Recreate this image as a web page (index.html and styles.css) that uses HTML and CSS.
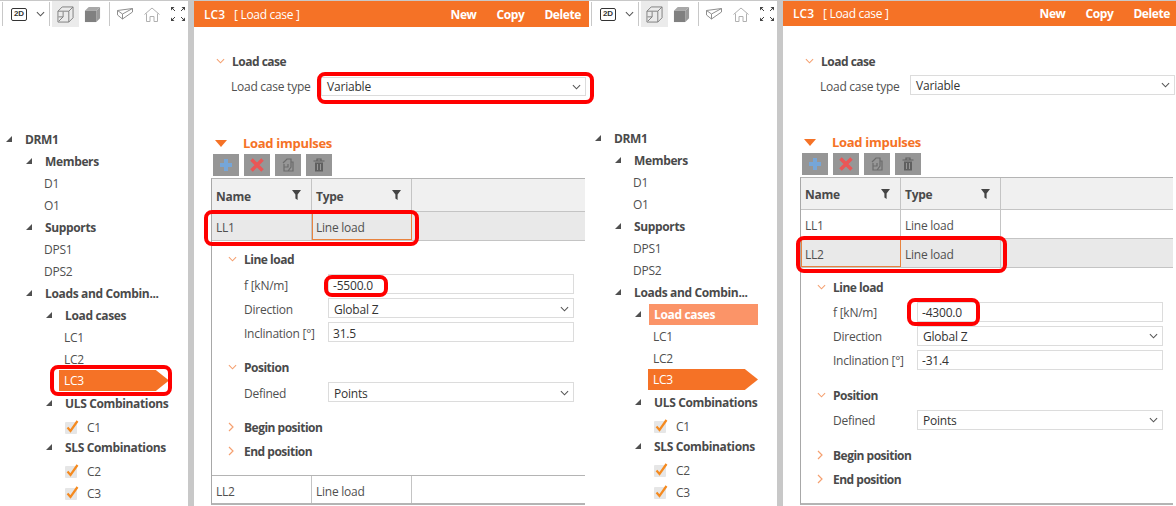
FILE: index.html
```html
<!DOCTYPE html>
<html lang="en">
<head>
<meta charset="utf-8">
<title>Load cases</title>
<link rel="stylesheet" href="styles.css">
</head>
<body>
<svg class="defs" aria-hidden="true">
  <symbol id="tri" viewBox="0 0 7 7"><path d="M7 0V7H0Z" fill="#505050"/></symbol>
  <symbol id="down" viewBox="0 0 10 6"><path d="M1 1l4 4 4-4" fill="none" stroke="#f5a070" stroke-width="1.2"/></symbol>
  <symbol id="right" viewBox="0 0 6 10"><path d="M1 1l4 4-4 4" fill="none" stroke="#f5a070" stroke-width="1.2"/></symbol>
  <symbol id="caret" viewBox="0 0 10 6"><path d="M1 1l4 4 4-4" fill="none" stroke="#555" stroke-width="1.2"/></symbol>
  <symbol id="funnel" viewBox="0 0 9 10"><path d="M0 0H9L5.6 4.5V10L3.4 8.5V4.5Z" fill="#444"/></symbol>
  <symbol id="check" viewBox="0 0 14 14"><rect x="0" y="2" width="12" height="12" rx="1" fill="#e6e6e6"/><path d="M2.5 7.5l3 3.5L12.5 1" fill="none" stroke="#f58a1f" stroke-width="2.2"/></symbol>
  <symbol id="wire" viewBox="0 0 18 18"><path d="M1 5.500H12.500V17H1ZM1 5.500L5.500 1H17V12.500L12.500 17M12.500 5.500L17 1M6.500 6V11.500H1.500M6.500 11.500L2 16" fill="none" stroke="#7d7d7d"/></symbol>
  <symbol id="solid" viewBox="0 0 18 18"><path d="M1 5L5 1H17L13 5Z" fill="#a8a8a8"/><path d="M13 5L17 1V13L13 17Z" fill="#9a9a9a"/><path d="M1 5H13V17H1Z" fill="#808080"/></symbol>
  <symbol id="box" viewBox="0 0 17 12"><path d="M.5 2.500L15.500 .5V4L5.500 11L.5 7ZM.5 2.500L5.500 6L15.500 .5M5.500 6V11" fill="none" stroke="#8f8f8f"/></symbol>
  <symbol id="home" viewBox="0 0 16 15"><path d="M.5 7.500L8 1l7.500 6.500M2.500 6.500V14.500H6V9.500H10V14.500H13.500V6.500" fill="none" stroke="#b0b0b0"/></symbol>
  <symbol id="expand" viewBox="0 0 16 16"><path d="M1 1H4.500L1 4.500ZM15 1V4.500L11.500 1ZM1 15V11.500L4.500 15ZM15 15H11.500L15 11.500Z" fill="#444"/><path d="M1.500 1.500L5 5M14.500 1.500L11 5M1.500 14.500L5 11M14.500 14.500L11 11" stroke="#444"/></symbol>
  <symbol id="plus" viewBox="0 0 14 14"><path d="M5 1H9V5H13V9H9V13H5V9H1V5H5Z" fill="#76a6d8"/></symbol>
  <symbol id="cross" viewBox="0 0 14 14"><path d="M1.500 1.500L12.500 12.500M12.500 1.500L1.500 12.500" stroke="#ea5656" stroke-width="3.500"/></symbol>
  <symbol id="copy" viewBox="0 0 14 14"><path d="M2 5L6 1H10V9L7 13H3V6M7 6V9H3M10 4H12V13H7" fill="none" stroke="#6c6c6c" stroke-width="1.200"/></symbol>
  <symbol id="bin" viewBox="0 0 14 14"><path d="M1.500 3H12.500M5 3V1H9V3" fill="none" stroke="#606060" stroke-width="1.200"/><path d="M3 4.500H11V13.500H3Z" fill="#606060"/><path d="M5.500 6V12M8.500 6V12" stroke="#969696"/></symbol>
</svg>

<main class="app">
  <!-- first capture -->
  <section class="shot shot-a">
    <aside class="side">
      <div class="tools">
        <span class="sep"></span><span class="badge2d">2D</span><svg class="ic-caret"><use href="#caret"/></svg><span class="sep"></span>
        <span class="tool on"><svg class="ic18"><use href="#wire"/></svg></span>
        <span class="tool"><svg class="ic18"><use href="#solid"/></svg></span><span class="sep"></span>
        <svg class="ic-box"><use href="#box"/></svg><svg class="ic-home"><use href="#home"/></svg><svg class="ic-expand"><use href="#expand"/></svg>
      </div>
      <ul class="tree">
        <li class="row l0 b"><svg class="tw"><use href="#tri"/></svg>DRM1</li>
        <li class="row l1 b"><svg class="tw"><use href="#tri"/></svg>Members</li>
        <li class="row leaf1">D1</li>
        <li class="row leaf1">O1</li>
        <li class="row l1 b"><svg class="tw"><use href="#tri"/></svg>Supports</li>
        <li class="row leaf1">DPS1</li>
        <li class="row leaf1">DPS2</li>
        <li class="row l1 b"><svg class="tw"><use href="#tri"/></svg>Loads and Combin...</li>
        <li class="row l2 b"><svg class="tw"><use href="#tri"/></svg>Load cases</li>
        <li class="row leaf2">LC1</li>
        <li class="row leaf2">LC2</li>
        <li class="row leaf2 sel">LC3<span class="ring ring-lc"></span></li>
        <li class="row l2 b"><svg class="tw"><use href="#tri"/></svg>ULS Combinations</li>
        <li class="row chk"><svg class="ck"><use href="#check"/></svg>C1</li>
        <li class="row l2 b"><svg class="tw"><use href="#tri"/></svg>SLS Combinations</li>
        <li class="row chk"><svg class="ck"><use href="#check"/></svg>C2</li>
        <li class="row chk"><svg class="ck"><use href="#check"/></svg>C3</li>
      </ul>
    </aside>
    <div class="split"></div>
    <div class="detail">
      <header class="bar"><span class="bar-name">LC3</span><span class="bar-kind">[ Load case ]</span><span class="bar-act">New</span><span class="bar-act">Copy</span><span class="bar-act">Delete</span></header>
      <div class="body">
        <h3 class="head case"><svg class="chev"><use href="#down"/></svg>Load case</h3>
        <div class="type-row"><span class="type-label">Load case type</span><span class="ctl sel-ctl type-ctl">Variable<svg class="ic-caret"><use href="#caret"/></svg><span class="ring ring-type"></span></span></div>
        <h2 class="imp"><span class="imp-tri"></span>Load impulses</h2>
        <div class="btns">
          <span class="btn"><svg><use href="#plus"/></svg></span><span class="btn"><svg><use href="#cross"/></svg></span><span class="btn"><svg><use href="#copy"/></svg></span><span class="btn"><svg><use href="#bin"/></svg></span>
        </div>
        <div class="table">
          <div class="tr th"><span class="td">Name<svg class="fn"><use href="#funnel"/></svg></span><span class="td">Type<svg class="fn"><use href="#funnel"/></svg></span><span class="td fill"></span></div>
          <div class="tr cur"><span class="td">LL1</span><span class="td focus">Line load</span><span class="td fill"></span><span class="ring ring-row-a"></span></div>
          <div class="panel">
            <h3 class="head"><svg class="chev"><use href="#down"/></svg>Line load</h3>
            <div class="fld"><span class="lab">f [kN/m]</span><span class="ctl">-5500.0<span class="ring ring-f-a"></span></span></div>
            <div class="fld"><span class="lab">Direction</span><span class="ctl sel-ctl">Global Z<svg class="ic-caret"><use href="#caret"/></svg></span></div>
            <div class="fld"><span class="lab">Inclination [°]</span><span class="ctl">31.5</span></div>
            <h3 class="head gap"><svg class="chev"><use href="#down"/></svg>Position</h3>
            <div class="fld"><span class="lab">Defined</span><span class="ctl sel-ctl">Points<svg class="ic-caret"><use href="#caret"/></svg></span></div>
            <h3 class="head gap2"><svg class="chev-r"><use href="#right"/></svg>Begin position</h3>
            <h3 class="head gap3"><svg class="chev-r"><use href="#right"/></svg>End position</h3>
          </div>
          <div class="tr last"><span class="td">LL2</span><span class="td">Line load</span><span class="td fill"></span></div>
        </div>
      </div>
    </div>
  </section>

  <!-- second capture -->
  <section class="shot shot-b">
    <aside class="side">
      <div class="tools">
        <span class="sep"></span><span class="badge2d">2D</span><svg class="ic-caret"><use href="#caret"/></svg><span class="sep"></span>
        <span class="tool on"><svg class="ic18"><use href="#wire"/></svg></span>
        <span class="tool"><svg class="ic18"><use href="#solid"/></svg></span><span class="sep"></span>
        <svg class="ic-box"><use href="#box"/></svg><svg class="ic-home"><use href="#home"/></svg><svg class="ic-expand"><use href="#expand"/></svg>
      </div>
      <ul class="tree">
        <li class="row l0 b"><svg class="tw"><use href="#tri"/></svg>DRM1</li>
        <li class="row l1 b"><svg class="tw"><use href="#tri"/></svg>Members</li>
        <li class="row leaf1">D1</li>
        <li class="row leaf1">O1</li>
        <li class="row l1 b"><svg class="tw"><use href="#tri"/></svg>Supports</li>
        <li class="row leaf1">DPS1</li>
        <li class="row leaf1">DPS2</li>
        <li class="row l1 b"><svg class="tw"><use href="#tri"/></svg>Loads and Combin...</li>
        <li class="row l2 b"><svg class="tw"><use href="#tri"/></svg><span class="parent-on">Load cases</span></li>
        <li class="row leaf2">LC1</li>
        <li class="row leaf2">LC2</li>
        <li class="row leaf2 sel">LC3</li>
        <li class="row l2 b"><svg class="tw"><use href="#tri"/></svg>ULS Combinations</li>
        <li class="row chk"><svg class="ck"><use href="#check"/></svg>C1</li>
        <li class="row l2 b"><svg class="tw"><use href="#tri"/></svg>SLS Combinations</li>
        <li class="row chk"><svg class="ck"><use href="#check"/></svg>C2</li>
        <li class="row chk"><svg class="ck"><use href="#check"/></svg>C3</li>
      </ul>
    </aside>
    <div class="split"></div>
    <div class="detail">
      <header class="bar"><span class="bar-name">LC3</span><span class="bar-kind">[ Load case ]</span><span class="bar-act">New</span><span class="bar-act">Copy</span><span class="bar-act">Delete</span></header>
      <div class="body">
        <h3 class="head case"><svg class="chev"><use href="#down"/></svg>Load case</h3>
        <div class="type-row"><span class="type-label">Load case type</span><span class="ctl sel-ctl type-ctl">Variable<svg class="ic-caret"><use href="#caret"/></svg></span></div>
        <h2 class="imp"><span class="imp-tri"></span>Load impulses</h2>
        <div class="btns">
          <span class="btn"><svg><use href="#plus"/></svg></span><span class="btn"><svg><use href="#cross"/></svg></span><span class="btn"><svg><use href="#copy"/></svg></span><span class="btn"><svg><use href="#bin"/></svg></span>
        </div>
        <div class="table">
          <div class="tr th"><span class="td">Name<svg class="fn"><use href="#funnel"/></svg></span><span class="td">Type<svg class="fn"><use href="#funnel"/></svg></span><span class="td fill"></span></div>
          <div class="tr"><span class="td">LL1</span><span class="td">Line load</span><span class="td fill"></span></div>
          <div class="tr cur"><span class="td focus">LL2</span><span class="td">Line load</span><span class="td fill"></span><span class="ring ring-row-b"></span></div>
          <div class="panel">
            <h3 class="head"><svg class="chev"><use href="#down"/></svg>Line load</h3>
            <div class="fld"><span class="lab">f [kN/m]</span><span class="ctl">-4300.0<span class="ring ring-f-b"></span></span></div>
            <div class="fld"><span class="lab">Direction</span><span class="ctl sel-ctl">Global Z<svg class="ic-caret"><use href="#caret"/></svg></span></div>
            <div class="fld"><span class="lab">Inclination [°]</span><span class="ctl">-31.4</span></div>
            <h3 class="head gap"><svg class="chev"><use href="#down"/></svg>Position</h3>
            <div class="fld"><span class="lab">Defined</span><span class="ctl sel-ctl">Points<svg class="ic-caret"><use href="#caret"/></svg></span></div>
            <h3 class="head gap2"><svg class="chev-r"><use href="#right"/></svg>Begin position</h3>
            <h3 class="head gap3"><svg class="chev-r"><use href="#right"/></svg>End position</h3>
          </div>
        </div>
      </div>
    </div>
  </section>
</main>
</body>
</html>
```

FILE: styles.css
```css
* { box-sizing: border-box; }
html, body { margin: 0; padding: 0; height: 506px; overflow: hidden; background: #fff; }
body {
  font-family: "Open Sans", "Noto Sans", "Liberation Sans", sans-serif;
  font-size: 12px;
  letter-spacing: -0.25px;
  color: #505050;
}
.defs { width: 0; height: 0; display: block; }
svg { display: block; flex: none; }
h2, h3, ul { margin: 0; padding: 0; font-size: inherit; list-style: none; }

.app { display: flex; height: 506px; border-top: 1px solid #c8c8c8; }
.shot { display: flex; height: 505px; }
.shot-a { width: 589px; }
.shot-b { width: 587px; }

/* left pane */
.side { width: 188px; flex: none; }
.tools { display: flex; align-items: center; height: 26px; padding-left: 2px; }
.sep { width: 1px; height: 24px; background: #c8c8c8; flex: none; }
.badge2d {
  width: 16px; height: 13px; margin-left: 8px; border: 1.5px solid #333; border-radius: 2px;
  font: bold 8px/10px "Liberation Sans", sans-serif; letter-spacing: 0; text-align: center; color: #333;
}
.ic-caret { width: 9px; height: 6px; margin: 0 4px 0 9px; }
.tool { width: 27px; height: 26px; margin-left: 2px; display: flex; align-items: center; justify-content: center; }
.tool.on { background: #ebebeb; }
.tool + .tool { margin-left: 0; }
.tool + .sep { margin-left: 3px; }
.ic18 { width: 17px; height: 17px; }
.ic-box { width: 17px; height: 12px; margin-left: 7px; }
.ic-home { width: 16px; height: 15px; margin-left: 10px; }
.ic-expand { width: 16px; height: 16px; margin-left: 10px; }

.tree { padding-top: 100px; }
.shot-a .tree { padding-top: 101px; }
.row { display: flex; align-items: center; height: 22px; position: relative; white-space: nowrap; }
.b { font-weight: 700; color: #4a4a4a; letter-spacing: -0.35px; }
.tw { width: 6px; height: 6px; margin-right: 13px; }
.l0 { padding-left: 6px; }
.l1 { padding-left: 26px; }
.l2 { padding-left: 46px; }
.leaf1 { padding-left: 44px; }
.leaf2 { padding-left: 64px; }
.chk { padding: 4px 0 0 65px; }
.ck { width: 14px; height: 14px; margin-right: 8px; }
.sel {
  margin-left: 59px; padding-left: 5px; width: 110px; color: #fff; isolation: isolate;
  height: 21px; margin-bottom: 1px;
}
.sel::before {
  content: ""; position: absolute; inset: 0; z-index: -1; background: #f57226;
  clip-path: polygon(0 0, 88% 0, 100% 50%, 88% 100%, 0 100%);
}
.parent-on {
  display: flex; align-items: center; width: 109px; height: 21px; margin-left: -5px; padding-left: 5px; background: #fb9468; color: #fff;
}

.split { width: 6px; flex: none; background: #c8c8c8; }

/* detail */
.detail { flex: 1; min-width: 0; }
.bar { display: flex; align-items: center; height: 26px; background: #f57226; color: #fff; padding: 0 8px 0 10px; letter-spacing: 0; }
.shot-b .bar { height: 25px; padding-left: 10px; padding-right: 6px; }
.bar-name { font-weight: 600; width: 30px; }
.bar-kind { margin-right: auto; letter-spacing: -0.3px; }
.bar-act { font-weight: 700; margin-left: 20px; letter-spacing: -0.4px; }

.body { padding-left: 17px; }
.head { display: flex; align-items: center; height: 18px; font-weight: 700; color: #4a4a4a; letter-spacing: -0.5px; }
.chev { width: 9px; height: 6px; margin-right: 7px; margin-left: 1px; }
.chev-r { width: 6px; height: 10px; margin-right: 10px; margin-left: 1px; }
.case { margin: 25px 0 7px 4px; }
.shot-b .case { margin: 26px 0 5px 4px; }
.type-row { display: flex; align-items: center; padding-left: 20px; }
.type-label { width: 90px; }
.shot-b .type-label { padding-top: 2px; }
.ctl {
  position: relative; display: flex; align-items: center; justify-content: space-between; width: 246px; height: 20px;
  padding: 0 4px; border: 1px solid #dcdcdc; color: #333; background: #fff; letter-spacing: -0.2px;
}
.sel-ctl { padding: 0 0 0 5px; }
.type-ctl { width: 265px; }
.shot-a .type-ctl { height: 19px; }
.imp { display: flex; align-items: center; height: 18px; margin: 38px 0 2px 4px; color: #f57226; font-size: 13px; font-weight: 700; letter-spacing: -0.3px; }
.imp-tri { width: 0; height: 0; border-style: solid; border-width: 7px 6px 0 6px; border-color: #f57226 transparent transparent; margin-right: 16px; }
.btns { display: flex; gap: 5px; height: 22px; margin: 0 0 2px 2px; }
.btn { width: 26px; height: 22px; background: #969696; display: flex; align-items: center; justify-content: center; }
.btn svg { width: 14px; height: 14px; }

.table { width: 374px; height: 327px; border: 1px solid #b4b4b4; border-width: 1px 0 2px 1px; border-left-color: #a8a8a8; }
.shot-b .table { width: 373px; height: 328px; }
.tr { position: relative; display: flex; height: 29px; border-bottom: 1px solid #c4c4c4; }
.tr.last { height: 27px; border-bottom: 0; }
.tr.last .td { padding-top: 3px; }
.th { height: 33px; background: #f0f0f0; font-weight: 700; color: #4a4a4a; letter-spacing: -0.3px; }
.shot-b .th { height: 32px; }
.cur { background: #e9e9e9; }
.td { position: relative; display: flex; align-items: center; justify-content: space-between; width: 100px; padding: 2px 10px 0 4px; border-right: 1px solid #c4c4c4; flex: none; }
.td.fill { flex: 1; border-right: 0; }
.focus { border: 1px solid #e8833e; padding-left: 3px; }
.fn { width: 9px; height: 10px; margin-top: -2px; }
.panel { height: 235px; padding: 9px 0 0 15px; border-bottom: 1px solid #b4b4b4; }
.shot-b .panel { padding-top: 10px; border-bottom: 0; height: auto; }
.fld { display: flex; align-items: center; height: 20px; margin-bottom: 4px; }
.lab { width: 101px; padding-left: 17px; }
.shot-a .lab { padding-top: 2px; }
.shot-a .panel .ctl { padding-top: 2px; }
.panel .head { margin-bottom: 6px; }
.panel .head.gap { margin-top: 16px; }
.panel .head.gap2 { margin-top: 16px; }

/* red call-outs */
.ring { position: absolute; border: 4px solid #f00; border-radius: 8px; pointer-events: none; background: transparent; }
.ring-lc { left: -9px; top: -5px; width: 122px; height: 31px; }
.ring-type { left: -5px; top: -6px; right: -9px; bottom: -9px; }
.ring-row-a { left: -8px; top: -2px; width: 215px; height: 36px; }
.ring-row-b { left: -5px; top: -3px; width: 211px; height: 37px; }
.ring-f-a { left: -5px; top: 0; width: 64px; height: 22px; }
.ring-f-b { left: -11px; top: -5px; width: 73px; height: 28px; }
```
